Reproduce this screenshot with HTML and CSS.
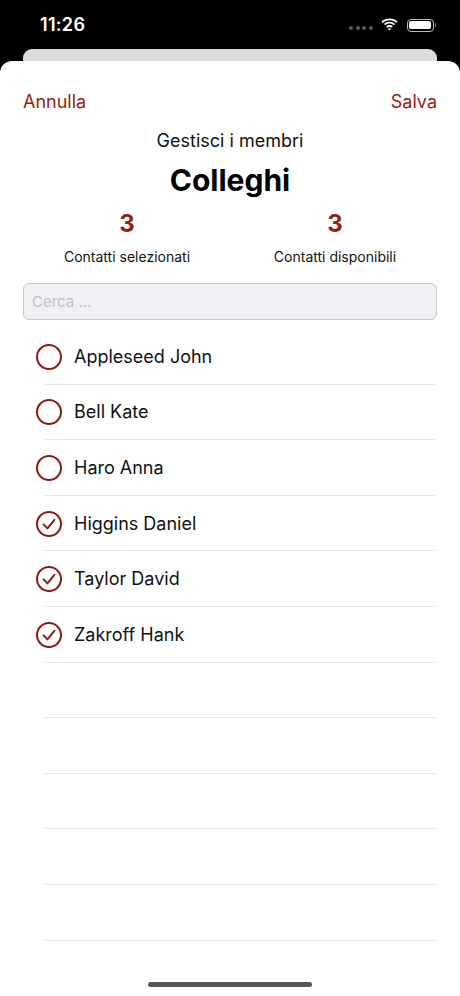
FILE: index.html
```html
<!DOCTYPE html>
<html lang="it">
<head>
<meta charset="utf-8">
<link rel="stylesheet" href="styles.css">
</head>
<body>
<div class="screen">
  <div class="status">
    <span class="time">11:26</span>
    <div class="status-icons">
      <span class="dots"><i></i><i></i><i></i><i></i></span>
      <svg class="wifi" width="17" height="13" viewBox="0 0 17 13">
        <path d="M8.5 2.2c2.6 0 5 1 6.8 2.7l1.2-1.3C14.4 1.6 11.6 0.4 8.5 0.4S2.6 1.6 0.5 3.6l1.2 1.3C3.5 3.2 5.9 2.2 8.5 2.2z" fill="#fff"/>
        <path d="M8.5 5.6c1.6 0 3.1 0.6 4.3 1.7l1.2-1.3C12.5 4.6 10.6 3.8 8.5 3.8S4.5 4.6 3 6l1.2 1.3C5.4 6.2 6.9 5.6 8.5 5.6z" fill="#fff"/>
        <path d="M8.5 8.9c0.8 0 1.5 0.3 2 0.8l1.2-1.3C10.9 7.6 9.7 7.1 8.5 7.1S6.1 7.6 5.300 8.4l1.2 1.3C7 9.2 7.7 8.9 8.5 8.9z" fill="#fff"/>
        <path d="M8.5 12.6l1.6-1.7c-0.4-0.4-1-0.6-1.6-0.6s-1.2 0.2-1.6 0.6z" fill="#fff"/>
      </svg>
      <span class="battery"><span class="level"></span></span>
      <span class="nub"></span>
    </div>
  </div>
  <div class="back-card"></div>
  <div class="sheet">
    <div class="nav">
      <span class="nav-btn">Annulla</span>
      <span class="nav-btn">Salva</span>
    </div>
    <div class="subtitle">Gestisci i membri</div>
    <h1 class="title">Colleghi</h1>
    <div class="stats">
      <div class="stat">
        <div class="stat-num">3</div>
        <div class="stat-label">Contatti selezionati</div>
      </div>
      <div class="stat">
        <div class="stat-num">3</div>
        <div class="stat-label">Contatti disponibili</div>
      </div>
    </div>
    <div class="search">Cerca ...</div>
    <ul class="list">
      <li class="row"><span class="check"></span><span class="name">Appleseed John</span></li>
      <li class="row"><span class="check"></span><span class="name">Bell Kate</span></li>
      <li class="row"><span class="check"></span><span class="name">Haro Anna</span></li>
      <li class="row"><span class="check on"><svg width="26" height="26" viewBox="0 0 26 26"><path d="M7.6 13.4l3.8 4 7-8.6" fill="none" stroke="#8e1a10" stroke-width="2" stroke-linecap="round" stroke-linejoin="round"/></svg></span><span class="name">Higgins Daniel</span></li>
      <li class="row"><span class="check on"><svg width="26" height="26" viewBox="0 0 26 26"><path d="M7.6 13.4l3.8 4 7-8.6" fill="none" stroke="#8e1a10" stroke-width="2" stroke-linecap="round" stroke-linejoin="round"/></svg></span><span class="name">Taylor David</span></li>
      <li class="row"><span class="check on"><svg width="26" height="26" viewBox="0 0 26 26"><path d="M7.6 13.4l3.8 4 7-8.6" fill="none" stroke="#8e1a10" stroke-width="2" stroke-linecap="round" stroke-linejoin="round"/></svg></span><span class="name">Zakroff Hank</span></li>
      <li class="row empty"></li>
      <li class="row empty"></li>
      <li class="row empty"></li>
      <li class="row empty"></li>
      <li class="row empty"></li>
    </ul>
    <div class="home-bar"></div>
  </div>
</div>
</body>
</html>
```

FILE: styles.css
```css
* { box-sizing: border-box; }
html, body { margin: 0; padding: 0; background: #000; }
body { font-family: "Inter", "Liberation Sans", Arial, sans-serif; -webkit-font-smoothing: antialiased; }
.screen { width: 460px; height: 996px; background: #000; overflow: hidden; display: flex; flex-direction: column; }
.status { height: 49px; display: flex; align-items: flex-start; justify-content: space-between; padding: 15px 24px 0 40px; color: #fff; flex-shrink: 0; }
.time { font-size: 18px; font-weight: 600; letter-spacing: 0.3px; line-height: 20px; }
.status-icons { display: flex; align-items: center; height: 20px; margin-top: 0; }
.dots { display: flex; gap: 2.5px; margin-right: 8px; margin-top: 6px; }
.dots i { width: 4px; height: 4px; border-radius: 50%; background: #5a5a5a; display: block; }
.wifi { margin-right: 9px; margin-top: -1px; }
.battery { width: 27px; height: 13px; border: 1.3px solid #bbb; border-radius: 4px; padding: 1.5px; display: flex; }
.level { flex: 1; background: #fff; border-radius: 2px; }
.nub { width: 1.5px; height: 4px; background: #888; margin-left: 1px; border-radius: 0 1px 1px 0; }
.back-card { height: 12px; margin: 0 23px; background: #dcdcdc; border-radius: 9px 9px 0 0; flex-shrink: 0; }
.sheet { flex: 1; background: #fff; border-radius: 12px 12px 0 0; display: flex; flex-direction: column; position: relative; }
.nav { display: flex; justify-content: space-between; padding: 31px 23px 0; }
.nav-btn { font-size: 18px; color: #981d12; line-height: 20px; }
.subtitle { text-align: center; font-size: 18px; color: #111; margin-top: 19px; line-height: 20px; }
.title { text-align: center; font-size: 30px; font-weight: 700; margin: 11px 0 0; line-height: 36px; color: #000; }
.stats { display: flex; padding: 0 21px 0 23px; margin-top: 12px; }
.stat { flex: 1; text-align: center; }
.stat-num { font-size: 24px; font-weight: 700; color: #981d12; line-height: 28px; }
.stat-label { font-size: 14px; color: #111; margin-top: 11px; line-height: 16px; }
.search { margin: 18px 23px 0; height: 37px; background: #f0f0f4; border: 1px solid #c9c9cc; border-radius: 6px; padding: 0 8px; font-size: 15px; color: #c2c2c6; display: flex; align-items: center; }
.list { list-style: none; margin: 9px 0 0; padding: 0; }
.row { height: 55.6px; display: flex; align-items: center; padding-left: 36px; position: relative; }
.row::after { content: ""; position: absolute; left: 44px; right: 23px; bottom: 0; height: 1px; background: #e8e8ea; }
.check { width: 26px; height: 26px; border: 2px solid #8e1a10; border-radius: 50%; flex-shrink: 0; display: flex; align-items: center; justify-content: center; }
.check svg { display: block; margin: -2px; }
.name { font-size: 18px; color: #111; margin-left: 12px; line-height: 22px; }
.home-bar { position: absolute; left: 148px; width: 164px; bottom: 9px; height: 5px; border-radius: 3px; background: #555; }
```
